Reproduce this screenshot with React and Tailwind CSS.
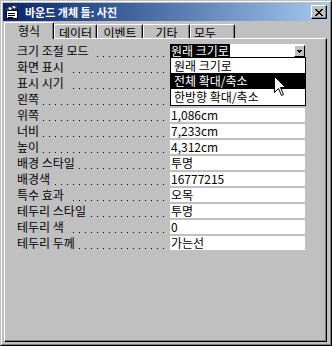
import React from 'react';

const KR = "font-['Noto_Sans_CJK_KR',sans-serif]";

const rows = [
    { label: '크기 조절 모드', value: '원래 크기로', combo: true },
    { label: '화면 표시', value: '' },
    { label: '표시 시기', value: '' },
    { label: '왼쪽', value: '' },
    { label: '위쪽', value: '1,086cm' },
    { label: '너비', value: '7,233cm' },
    { label: '높이', value: '4,312cm' },
    { label: '배경 스타일', value: '투명' },
    { label: '배경색', value: '16777215' },
    { label: '특수 효과', value: '오목' },
    { label: '테두리 스타일', value: '투명' },
    { label: '테두리 색', value: '0' },
    { label: '테두리 두께', value: '가는선' },
];

const tabs = [
    { name: '형식', w: 'w-[50px]', active: true },
    { name: '데이터', w: 'w-[43px]' },
    { name: '이벤트', w: 'w-[46px]' },
    { name: '기타', w: 'w-[47px]' },
    { name: '모두', w: 'w-[45px]' },
];

const options = ['원래 크기로', '전체 확대/축소', '한방향 확대/축소'];

const FrameIcon = () => (
    <svg width="16" height="16" viewBox="0 0 16 16" shapeRendering="crispEdges">
        <rect x="2.5" y="6.5" width="11" height="8" fill="#fff" stroke="#000" />
        <rect x="4" y="9" width="7" height="1" fill="#000" />
        <rect x="4" y="11" width="7" height="1" fill="#000" />
        <rect x="4" y="13" width="5" height="1" fill="#000" />
        <polygon points="1,5 12,1 14,3 3,7" fill="#404040" shapeRendering="auto" />
        <polygon points="4,4 6,3 8,5 6,6" fill="#fff" shapeRendering="auto" />
        <polygon points="8,2.6 10,1.9 12,3.9 10,4.6" fill="#fff" shapeRendering="auto" />
    </svg>
);

const CloseButton = () => (
    <div className="ml-auto mr-[2px] w-[16px] h-[14px] bg-[#c0c0c0] border border-t-white border-l-white border-r-black border-b-black shadow-[inset_-1px_-1px_0_#808080] flex items-center justify-center">
        <svg width="8" height="7" viewBox="0 0 8 7" shapeRendering="crispEdges">
            <path d="M0 0h2v1h-2zM6 0h2v1h-2zM1 1h2v1h-2zM5 1h2v1h-2zM2 2h4v1h-4zM3 3h2v1h-2zM2 4h4v1h-4zM1 5h2v1h-2zM5 5h2v1h-2zM0 6h2v1h-2zM6 6h2v1h-2z" fill="#000" />
        </svg>
    </div>
);

const Cursor = () => (
    <svg width="13" height="21" viewBox="0 0 13 21" className="absolute left-[104px] top-[32px] z-30">
        <path d="M0.5 0.5 L0.5 16.5 L4.5 12.5 L7.5 19.5 L9.5 18.5 L6.5 11.5 L11.5 11.5 Z" fill="#fff" stroke="#000" strokeWidth="1" />
    </svg>
);

const ComboBox = ({ value }) => (
    <div className="relative flex items-center w-[135px] h-[14px] bg-white">
        <span className="bg-black text-white pl-px pr-px leading-[14px] text-[12px]">{value}</span>
        <div className="ml-auto self-start mt-px w-[11px] h-[12px] bg-[#c0c0c0] border border-t-white border-l-white border-r-black border-b-black flex items-center justify-center">
            <svg width="5" height="3" viewBox="0 0 5 3" shapeRendering="crispEdges">
                <path d="M0 0h5v1h-5zM1 1h3v1h-3zM2 2h1v1h-1z" fill="#000" />
            </svg>
        </div>
        <div className="absolute left-0 top-[13px] z-20 w-[136px] bg-white border border-black">
            {options.map((opt, i) => (
                <div
                    key={opt}
                    className={`pl-[3px] text-[12px] leading-[15px] ${i === 0 ? 'h-[15px]' : 'h-[16px]'} ${i === 1 ? 'bg-black text-white' : 'text-black'}`}
                >
                    {opt}
                </div>
            ))}
        </div>
        <Cursor />
    </div>
);

export default function App() {
    return (
        <div className={`w-[332px] h-[346px] bg-[#c0c0c0] border border-t-[#c0c0c0] border-l-[#c0c0c0] border-r-black border-b-black ${KR}`}>
            <div className="h-full border border-t-white border-l-white border-r-[#808080] border-b-[#808080] p-px flex flex-col">
                {/* title bar */}
                <div className="h-[18px] flex items-center bg-linear-to-r from-[#0a246a] to-[#a6caf0]">
                    <div className="ml-px">
                        <FrameIcon />
                    </div>
                    <span className="ml-[5px] text-white text-[11px] font-bold leading-[14px]">바운드 개체 틀: 사진</span>
                    <CloseButton />
                </div>

                {/* tabs */}
                <div className="mt-px h-[16px] flex items-end pl-px">
                    {tabs.map(tab => (
                        tab.active ? (
                            <div
                                key={tab.name}
                                className={`${tab.w} h-[17px] -mb-px relative z-10 bg-[#c0c0c0] border-l border-t border-r border-l-white border-t-white border-r-black shadow-[inset_-1px_0_0_#808080] rounded-t-[2px] flex justify-center pt-px text-[12px] leading-[14px] text-black`}
                            >
                                {tab.name}
                            </div>
                        ) : (
                            <div
                                key={tab.name}
                                className={`${tab.w} h-[14px] bg-[#c0c0c0] border-l border-t border-r border-l-white border-t-white border-r-black shadow-[inset_-1px_0_0_#808080] rounded-t-[2px] flex ${tab.name === '모두' ? 'pl-[3px]' : 'justify-center'} pt-px text-[12px] leading-[14px] text-black`}
                            >
                                {tab.name}
                            </div>
                        )
                    ))}
                </div>

                {/* property sheet */}
                <div className="flex-1 mb-px ml-px w-[323px] border border-t-white border-l-white border-r-black border-b-black shadow-[inset_-1px_-1px_0_#808080] pt-[4px]">
                    {rows.map(row => (
                        <div key={row.label} className="flex items-center h-[16px]">
                            {/* label with dotted leader drawn as a repeating background */}
                            <div className="w-[159px] h-[14px] pl-[12px] flex bg-origin-content bg-clip-content bg-[linear-gradient(to_right,#000_1px,transparent_1px)] bg-[length:6px_1px] bg-[position:2px_12px] bg-repeat-x text-[12px] leading-[14px] text-black whitespace-nowrap">
                                <span className="bg-[#c0c0c0] pr-[4px]">{row.label}</span>
                            </div>
                            <div className="ml-[6px]">
                                {row.combo ? (
                                    <ComboBox value={row.value} />
                                ) : (
                                    <div className="w-[135px] h-[14px] bg-white pl-px text-[12px] leading-[14px] text-black whitespace-nowrap">
                                        {row.value}
                                    </div>
                                )}
                            </div>
                        </div>
                    ))}
                </div>
            </div>
        </div>
    );
}
